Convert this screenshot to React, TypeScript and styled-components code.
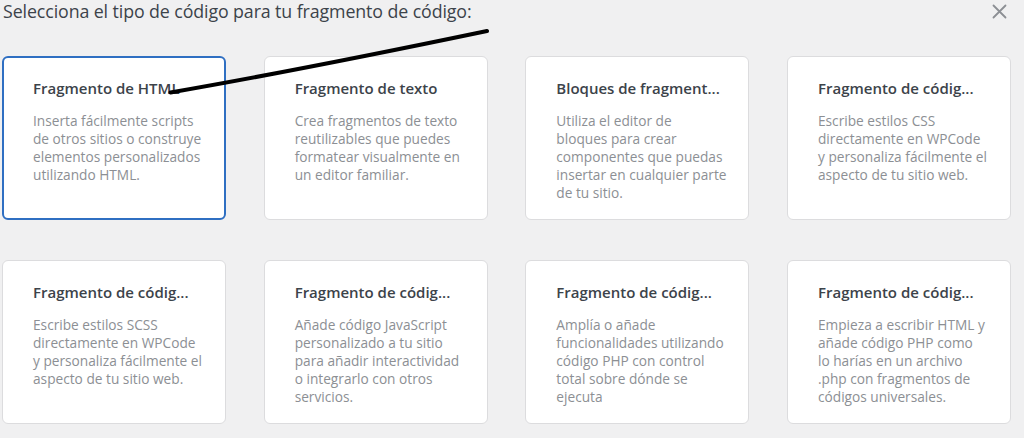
import React from "react";
import styled, { createGlobalStyle } from "styled-components";

const GlobalStyle = createGlobalStyle`
  html, body {
    margin: 0;
    padding: 0;
    background: #f0f0f1;
  }
  body {
    font-family: "Open Sans", "Noto Sans", sans-serif;
    -webkit-font-smoothing: antialiased;
  }
`;

const Page = styled.div`
  position: relative;
  width: 1024px;
  height: 438px;
  overflow: hidden;
  background: #f0f0f1;
  box-sizing: border-box;
  padding: 0 13px 0 2px;
`;

const Header = styled.div`
  display: flex;
  align-items: flex-start;
  justify-content: space-between;
  height: 56px;
`;

const Heading = styled.h2`
  margin: 0;
  padding: 0 0 0 1px;
  font-size: 17.8px;
  line-height: 22px;
  font-weight: 500;
  color: #3c434a;
  letter-spacing: -0.1px;
`;

const CloseButton = styled.button`
  border: 0;
  background: transparent;
  padding: 0;
  margin: 3px 4px 0 0;
  width: 16px;
  height: 16px;
  display: flex;
  align-items: center;
  justify-content: center;
  color: #8c8f94;
  cursor: pointer;
`;

const Grid = styled.div`
  display: grid;
  grid-template-columns: repeat(4, 224px);
  column-gap: 37.67px;
  row-gap: 40px;
`;

const Card = styled.div<{ $active?: boolean }>`
  box-sizing: border-box;
  height: 164px;
  background: #fff;
  border-radius: 6px;
  border: ${(p) => (p.$active ? "2px solid #2f6fc2" : "1px solid #dcdcde")};
  padding: ${(p) => (p.$active ? "19px 29px 0 29px" : "20px 30px 0 30px")};
  overflow: hidden;
`;

const CardTitle = styled.h3`
  margin: 0 0 13px;
  font-size: 15px;
  line-height: 22px;
  font-weight: 600;
  color: #3c434a;
  white-space: nowrap;
`;

const CardText = styled.p`
  margin: 0;
  font-size: 13.7px;
  line-height: 18px;
  font-weight: 400;
  color: #8c8f94;
  white-space: nowrap;
`;

const Line = styled.span`
  display: block;
`;

const Annotation = styled.svg`
  position: absolute;
  left: 0;
  top: 0;
  pointer-events: none;
`;

const cards = [
  {
    title: "Fragmento de HTML",
    lines: ["Inserta fácilmente scripts", "de otros sitios o construye", "elementos personalizados", "utilizando HTML."],
    active: true,
  },
  {
    title: "Fragmento de texto",
    lines: ["Crea fragmentos de texto", "reutilizables que puedes", "formatear visualmente en", "un editor familiar."],
  },
  {
    title: "Bloques de fragment...",
    lines: ["Utiliza el editor de", "bloques para crear", "componentes que puedas", "insertar en cualquier parte", "de tu sitio."],
  },
  {
    title: "Fragmento de códig...",
    lines: ["Escribe estilos CSS", "directamente en WPCode", "y personaliza fácilmente el", "aspecto de tu sitio web."],
  },
  {
    title: "Fragmento de códig...",
    lines: ["Escribe estilos SCSS", "directamente en WPCode", "y personaliza fácilmente el", "aspecto de tu sitio web."],
  },
  {
    title: "Fragmento de códig...",
    lines: ["Añade código JavaScript", "personalizado a tu sitio", "para añadir interactividad", "o integrarlo con otros", "servicios."],
  },
  {
    title: "Fragmento de códig...",
    lines: ["Amplía o añade", "funcionalidades utilizando", "código PHP con control", "total sobre dónde se", "ejecuta"],
  },
  {
    title: "Fragmento de códig...",
    lines: ["Empieza a escribir HTML y", "añade código PHP como", "lo harías en un archivo", ".php con fragmentos de", "códigos universales."],
  },
];

export default function App() {
  return (
    <>
      <GlobalStyle />
      <Page>
        <Header>
          <Heading>Selecciona el tipo de código para tu fragmento de código:</Heading>
          <CloseButton aria-label="Cerrar">
            <svg width="15" height="15" viewBox="0 0 15 15">
              <path d="M1.5 1.5 L13.5 13.5 M13.5 1.5 L1.5 13.5" stroke="currentColor" strokeWidth="1.8" strokeLinecap="round" />
            </svg>
          </CloseButton>
        </Header>
        <Grid>
          {cards.map((c, i) => (
            <Card key={i} $active={c.active}>
              <CardTitle>{c.title}</CardTitle>
              <CardText>
                {c.lines.map((l, j) => (
                  <Line key={j}>{l}</Line>
                ))}
              </CardText>
            </Card>
          ))}
        </Grid>
        <Annotation width="1024" height="438" viewBox="0 0 1024 438">
          <path
            d="M170.5 92.5 Q 300 70 487 31"
            stroke="#000"
            strokeWidth="4"
            fill="none"
            strokeLinecap="round"
          />
        </Annotation>
      </Page>
    </>
  );
}
